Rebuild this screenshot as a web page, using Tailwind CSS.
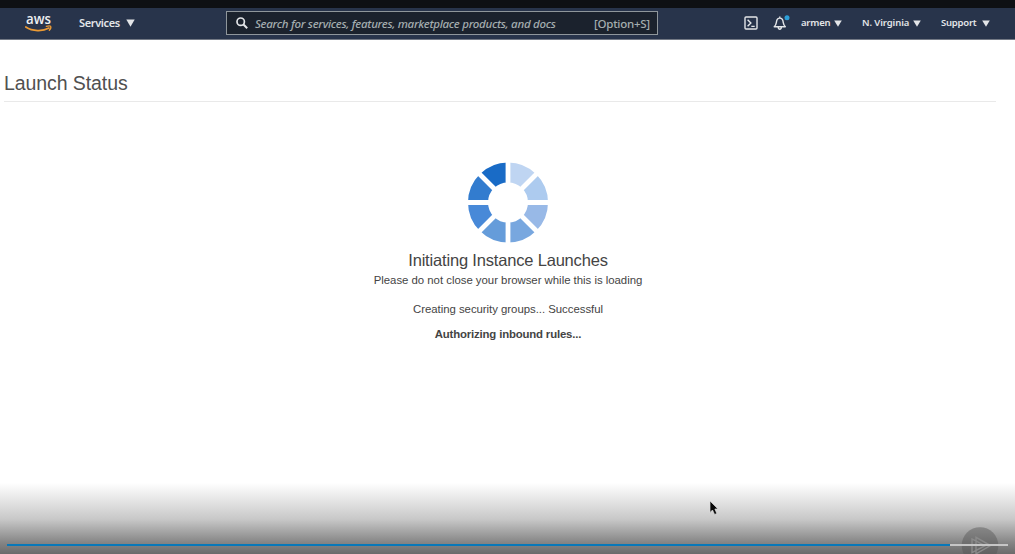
<!DOCTYPE html>
<html lang="en">
<head>
<meta charset="utf-8">
<title>Launch Status</title>
<script src="https://cdn.jsdelivr.net/npm/@tailwindcss/browser@4"></script>
</head>
<body class="relative flex h-[554px] w-[1015px] flex-col overflow-hidden bg-white font-['Liberation_Sans',Arial,sans-serif] text-[#444]">
  <div class="h-2 shrink-0 bg-[#0e1014]"></div>
  <header class="flex h-8 shrink-0 items-center border-b border-[#737985] bg-[#28344b] font-['Noto_Sans',sans-serif] font-semibold whitespace-nowrap text-[#e3e5e8]">
    <svg class="ml-[25px] h-[20px] w-7 shrink-0 overflow-visible" viewBox="0 0 28 20">
      <text x="1" y="9.8" font-family="Open Sans, sans-serif" font-size="13.5" font-weight="600" fill="#eef0f2" textLength="25" lengthAdjust="spacingAndGlyphs">aws</text>
      <path d="M.8 13c6.8 4.5 16.8 4.6 23.2 1.1" fill="none" stroke="#eb9a34" stroke-width="1.7" stroke-linecap="round"/>
      <path d="M21.3 12.4c1.8-.6 3.8-.6 4.3-.1.4.6-.1 2.7-1.3 4" fill="none" stroke="#eb9a34" stroke-width="1.3" stroke-linecap="round"/>
    </svg>
    <nav class="ml-[26px] flex w-[147px] items-center gap-[6px] text-[11px]">
      <span class="w-[41px] tracking-[-0.36px]">Services</span>
      <svg class="mb-px h-2 w-[9px]" viewBox="0 0 9 8"><path d="M.3.5h8.4L4.5 7.8z" fill="#e3e5e8"/></svg>
    </nav>
    <div class="mb-px flex h-6 w-[432px] items-center border border-[#8f969b] bg-[#1b222d] text-[#a4adaf]">
      <svg class="ml-[9px] h-3 w-3 shrink-0" viewBox="0 0 12 12" fill="none" stroke="#e3e5e8" stroke-width="1.7"><circle cx="4.7" cy="4.7" r="3.7"/><path d="m7.5 7.5 3.7 3.7" stroke-width="2"/></svg>
      <span class="ml-[7px] w-[339px] pt-px text-[11.5px] font-medium tracking-[-0.28px] italic">Search for services, features, marketplace products, and docs</span>
      <span class="pt-px text-[11.5px] font-medium tracking-[-0.25px]">[Option+S]</span>
    </div>
    <svg class="mb-px ml-[86px] h-[14px] w-[14px] shrink-0" viewBox="0 0 14 14" fill="none" stroke="#e3e5e8" stroke-width="1.4"><rect x="1" y="1" width="12" height="12" rx="1"/><path d="m3.6 3.7 3.3 3.3-3.3 3.3M7.3 10.4h3.4"/></svg>
    <svg class="mb-[2px] ml-[15px] h-4 w-[17px] shrink-0" viewBox="0 0 17 16"><path d="M1.2 11.7c2.1-1.6 1.9-3 2.3-5.1C3.8 4.5 5 3.1 6.8 3.1s3 1.4 3.3 3.5c.4 2.1.2 3.5 2.3 5.1zM5.2 12.1c0 2.8 3.2 2.8 3.2 0M6.8 3V1.5" fill="none" stroke="#e3e5e8" stroke-width="1.4" stroke-linejoin="round"/><circle cx="14" cy="2.7" r="2.5" fill="#2d9fd8"/></svg>
    <div class="ml-[11px] flex items-center text-[9.5px] tracking-[-0.22px]">
      <span class="w-[33px]">armen</span>
      <svg class="h-[7px] w-2" viewBox="0 0 8 7"><path d="M.2.4h7.6L4 6.8z" fill="#e3e5e8"/></svg>
      <span class="ml-5 w-[51px] tracking-[-0.1px]">N. Virginia</span>
      <svg class="h-[7px] w-2" viewBox="0 0 8 7"><path d="M.2.4h7.6L4 6.8z" fill="#e3e5e8"/></svg>
      <span class="ml-[20px] w-[41px]">Support</span>
      <svg class="h-[7px] w-2" viewBox="0 0 8 7"><path d="M.2.4h7.6L4 6.8z" fill="#e3e5e8"/></svg>
    </div>
  </header>
  <main class="flex flex-col items-center whitespace-nowrap">
    <h1 class="ml-1 h-[62px] w-[992px] self-start border-b border-[#e9e9e9] pt-[29px] text-[19.5px] leading-7 tracking-[-0.08px] text-[#505050]">Launch Status</h1>
    <svg class="mt-[60px] h-[82px] w-[82px]" viewBox="-41 -40.5 82 82">
      <g>
        <path d="M0-40A40 40 0 0 1 28.28-28.28L14.14-14.14A20 20 0 0 0 0-20z" fill="#bfd5f2"/>
        <path d="M28.28-28.28A40 40 0 0 1 40 0H20A20 20 0 0 0 14.14-14.14z" fill="#adcbef"/>
        <path d="M40 0A40 40 0 0 1 28.28 28.28L14.14 14.14A20 20 0 0 0 20 0z" fill="#98b9e7"/>
        <path d="M28.28 28.28A40 40 0 0 1 0 40V20A20 20 0 0 0 14.14 14.14z" fill="#78a7df"/>
        <path d="M0 40A40 40 0 0 1-28.28 28.28L-14.14 14.14A20 20 0 0 0 0 20z" fill="#659cda"/>
        <path d="M-28.28 28.28A40 40 0 0 1-40 0H-20A20 20 0 0 0-14.14 14.14z" fill="#4889d8"/>
        <path d="M-40 0A40 40 0 0 1-28.28-28.28L-14.14-14.14A20 20 0 0 0-20 0z" fill="#327ccf"/>
        <path d="M-28.28-28.28A40 40 0 0 1 0-40V-20A20 20 0 0 0-14.14-14.14z" fill="#196bc6"/>
      </g>
      <path d="M0-41V41M-41 0H41M-30-30 30 30M30-30-30 30" stroke="#fff" stroke-width="4.8"/>
    </svg>
    <h2 class="mt-[6px] pl-px text-[16.5px] leading-5 tracking-[-0.18px]">Initiating Instance Launches</h2>
    <p class="mt-[2px] pl-px text-[11.4px] leading-4 tracking-[-0.02px]">Please do not close your browser while this is loading</p>
    <p class="mt-[13px] pl-px text-[11.4px] leading-4 tracking-[-0.03px]">Creating security groups... Successful</p>
    <p class="mt-[9px] pl-px text-[11.4px] leading-4 font-bold tracking-[-0.17px]">Authorizing inbound rules...</p>
  </main>
  <div class="absolute inset-x-0 bottom-0 h-[71px] bg-[linear-gradient(to_bottom,#fff_0%,#e4e4e4_25%,#c8c8c8_51%,#858585_84%,#6b6b6b_100%)]"></div>
  <svg class="absolute top-[527px] left-[961px] h-[27px] w-[38px]" viewBox="0 0 38 27"><circle cx="19" cy="18.5" r="18.3" fill="#555" fill-opacity=".45"/><g fill="none" stroke="#8a8a8a" stroke-width="1.4"><path d="M11 12v13.5l13-6.8zM15 10.3v16.6l14.5-8.3z"/></g></svg>
  <div class="absolute top-[544px] left-[7px] flex h-[2px] w-[1001px] bg-[#c6c6c6]"><div class="h-full w-[943px] bg-[#0878b9]"></div></div>
  <svg class="absolute top-[500px] left-[709px] h-[16px] w-[11px]" viewBox="0 0 11 16"><path d="M1 1v11.5L3.5 10 5.6 14.5 7.8 13.5 5.9 9H9z" fill="#080808" stroke="#ddd" stroke-width=".7"/></svg>
</body>
</html>
